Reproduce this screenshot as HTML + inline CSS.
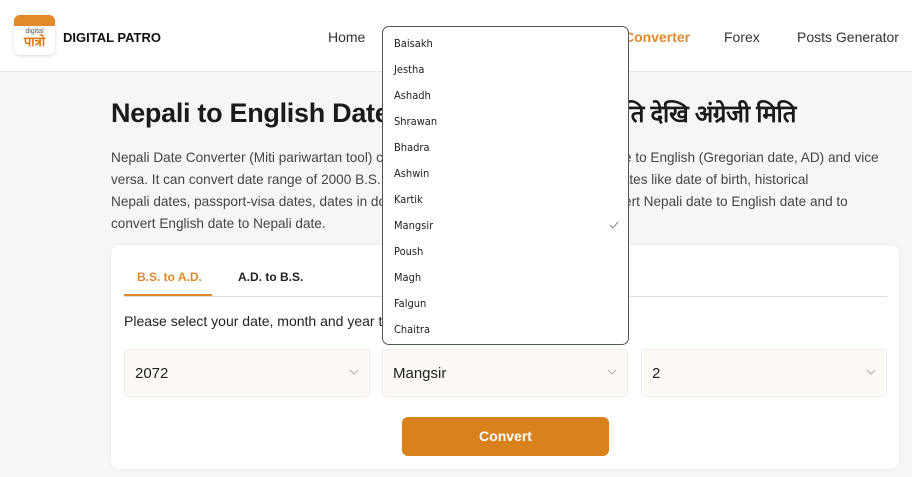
<!DOCTYPE html>
<html><head><meta charset="utf-8"><style>
*{box-sizing:border-box;margin:0;padding:0}
body{width:912px;height:477px;overflow:hidden;background:#f6f6f6;font-family:"Liberation Sans",Arial,sans-serif;position:relative;color:#222}
.hdr{position:absolute;left:0;top:0;width:912px;height:72px;background:#fff;border-bottom:1px solid #e8e8e8}
.nav{position:absolute;top:29px;font-size:14px;color:#333}
h1{position:absolute;left:111px;top:97px;font-size:27px;font-weight:bold;color:#1a1a1a;font-family:"Liberation Sans","Noto Sans CJK SC",sans-serif;white-space:nowrap;letter-spacing:-0.3px}
.p{position:absolute;left:111px;top:147px;width:800px;font-size:13.6px;line-height:22px;color:#444;white-space:nowrap}
.card{position:absolute;left:111px;top:245px;width:788px;height:224px;background:#fff;border-radius:8px;box-shadow:0 0 3px rgba(0,0,0,.08)}
.sel{position:absolute;top:349px;height:48px;background:#fdf9f4;border:1px solid #eee;border-radius:4px;font-size:15px;padding:15px 10px;color:#222}
.sel svg{position:absolute;right:10px;top:19px}
.dd{position:absolute;left:382px;top:26px;width:247px;height:319px;background:#fff;border:1px solid #555;border-radius:7px;font-size:11px;font-family:"DejaVu Sans Condensed","DejaVu Sans",sans-serif;color:#222}
.dd div{position:absolute;left:11px}
</style></head><body>
<div class="hdr">
 <div style="position:absolute;left:14px;top:15px;width:41px;height:40px;border-radius:6px;background:#fff;box-shadow:0 1px 3px rgba(0,0,0,.15);overflow:hidden">
  <div style="height:11px;background:#e08a2c"></div>
  <div style="font-size:7px;color:#555;text-align:center;margin-top:2px">digital</div>
  <div style="font-size:13px;color:#d97a1a;text-align:center;font-weight:bold;line-height:13px;font-family:'Liberation Sans','Noto Sans CJK SC',sans-serif">पात्रो</div>
 </div>
 <div style="position:absolute;left:63px;top:30px;font-size:13px;font-weight:bold;color:#111">DIGITAL PATRO</div>
 <div class="nav" style="left:328px">Home</div>
 <div class="nav" style="left:624px;color:#e08a2c;font-weight:bold">Converter</div>
 <div class="nav" style="left:724px">Forex</div>
 <div class="nav" style="left:797px">Posts Generator</div>
</div>
<h1>Nepali to English Date Converter | <span style="font-size:24px">नेपाली मिति देखि अंग्रेजी मिति</span></h1>
<div class="p">Nepali Date Converter (Miti pariwartan tool) converts Nepali (Bikram Sambat, BS) date to English (Gregorian date, AD) and vice<br>versa. It can convert date range of 2000 B.S. to 2090 B.S. It is useful for converting dates like date of birth, historical<br>Nepali dates, passport-visa dates, dates in documents etc. Use this converter to convert Nepali date to English date and to<br>convert English date to Nepali date.</div>
<div class="card">
 <div style="position:absolute;left:26px;top:25px;font-size:12px;font-weight:bold;color:#e08a2c">B.S. to A.D.</div>
 <div style="position:absolute;left:127px;top:25px;font-size:12px;font-weight:bold;color:#222">A.D. to B.S.</div>
 <div style="position:absolute;left:13px;top:51px;width:763px;height:1px;background:#ddd"></div>
 <div style="position:absolute;left:13px;top:49px;width:88px;height:2px;background:#e08a2c"></div>
 <div style="position:absolute;left:13px;top:68px;font-size:14px;color:#222">Please select your date, month and year to convert</div>
 <div style="position:absolute;left:291px;top:172px;width:207px;height:39px;background:#d9821b;border-radius:6px;color:#fff;font-weight:bold;font-size:14px;text-align:center;line-height:39px">Convert</div>
</div>
<div class="sel" style="left:124px;width:246px">2072<svg width="10" height="6"><path d="M1 1l4 4 4-4" stroke="#aaa" fill="none"/></svg></div>
<div class="sel" style="left:382px;width:246px">Mangsir<svg width="10" height="6"><path d="M1 1l4 4 4-4" stroke="#aaa" fill="none"/></svg></div>
<div class="sel" style="left:641px;width:246px">2<svg width="10" height="6"><path d="M1 1l4 4 4-4" stroke="#aaa" fill="none"/></svg></div>
<div class="dd">
 <div style="top:10px">Baisakh</div><div style="top:36px">Jestha</div><div style="top:62px">Ashadh</div><div style="top:88px">Shrawan</div><div style="top:114px">Bhadra</div><div style="top:140px">Ashwin</div><div style="top:166px">Kartik</div><div style="top:192px">Mangsir</div><div style="top:218px">Poush</div><div style="top:244px">Magh</div><div style="top:270px">Falgun</div><div style="top:296px">Chaitra</div>
 <svg style="position:absolute;left:226px;top:194px" width="10" height="8"><path d="M1 4l3 3 5-6" stroke="#888" fill="none"/></svg>
</div>
</body></html>
